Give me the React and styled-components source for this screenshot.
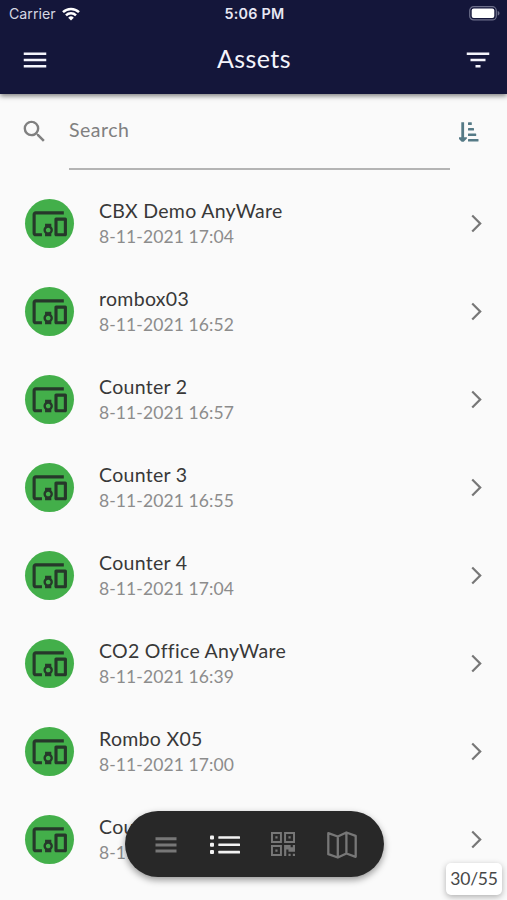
import React from 'react'

import styled, { createGlobalStyle } from 'styled-components';
import {
    MdMenu,
    MdFilterList,
    MdSearch,
    MdDevicesOther,
    MdArrowForwardIos,
} from 'react-icons/md';

const assets = [
    { name: 'CBX Demo AnyWare', date: '8-11-2021 17:04' },
    { name: 'rombox03', date: '8-11-2021 16:52' },
    { name: 'Counter 2', date: '8-11-2021 16:57' },
    { name: 'Counter 3', date: '8-11-2021 16:55' },
    { name: 'Counter 4', date: '8-11-2021 17:04' },
    { name: 'CO2 Office AnyWare', date: '8-11-2021 16:39' },
    { name: 'Rombo X05', date: '8-11-2021 17:00' },
    { name: 'Counter 5', date: '8-11-2021 17:01' },
];

function WifiIcon() {
    return (
        <svg width="18" height="14" viewBox="0 0 18 14" fill="none" stroke="#fff" strokeWidth="2.5">
            <path d="M1 5.2a11.4 11.4 0 0 1 16 0" />
            <path d="M4 8.4a7.1 7.1 0 0 1 10 0" />
            <path d="M6.2 10.7a4 4 0 0 1 5.6 0L9 13.6z" fill="#fff" stroke="none" />
        </svg>
    )
}

function BatteryIcon() {
    return (
        <svg width="31" height="15" viewBox="0 0 31 15">
            <rect x="0.7" y="0.7" width="26.6" height="13.2" rx="4" fill="none" stroke="#6d6f8b" strokeWidth="1.2" />
            <rect x="2.7" y="2.6" width="22.6" height="9.4" rx="2" fill="#fff" />
            <path d="M28.7 5v4.6c1.1-.4 1.8-1.2 1.8-2.3s-.7-1.9-1.8-2.3z" fill="#6d6f8b" />
        </svg>
    )
}

function SortIcon() {
    return (
        <svg width="20" height="20" viewBox="0 0 20 20" fill="#557a86">
            <path d="M2.3.3h2.800v15h2.800v1.200L4.700 19.700h-2L-.4 16.500v-1.200h2.700z" />
            <rect x="9" y=".3" width="3.8" height="2.6" rx=".5" />
            <rect x="9" y="5.900" width="6" height="2.6" rx=".5" />
            <rect x="9" y="11.500" width="8.200" height="2.6" rx=".5" />
            <rect x="9" y="17" width="10.500" height="2.6" rx=".5" />
        </svg>
    )
}

function LinesIcon() {
    return (
        <svg width="22" height="16" viewBox="0 0 22 16" fill="currentColor">
            <path d="M.5.2h21v3H.5zM.5 6.400h21v3H.5zM.5 12.500h21v3H.5z" />
        </svg>
    )
}

function ListIcon() {
    return (
        <svg width="30" height="20" viewBox="0 0 30 20" fill="currentColor">
            <rect x="0" y=".5" width="4" height="4" rx="1" />
            <rect x="0" y="7.8" width="4" height="4" rx="1" />
            <rect x="0" y="15.1" width="4" height="4" rx="1" />
            <rect x="8.3" y="1.2" width="21.7" height="2.6" rx=".5" />
            <rect x="8.3" y="8.5" width="21.7" height="2.6" rx=".5" />
            <rect x="8.3" y="15.8" width="21.7" height="2.6" rx=".5" />
        </svg>
    )
}

function QrIcon() {
    return (
        <svg width="24" height="24" viewBox="0 0 11 11" fill="currentColor" fillRule="evenodd">
            <path d="M0 0h5v5H0zM.9.9v3.2h3.200V.9zM2 2h1v1H2z" />
            <path d="M6 0h5v5H6zM6.900.9v3.200h3.200V.9zM8 2h1v1H8z" />
            <path d="M0 6h5v5H0zM.9 6.900v3.200h3.200V6.900zM2 8h1v1H2z" />
            <path d="M6 6h3v1h1V6h1v3H8V8H7v3H6zM8 10h1v1H8zM10 10h1v1h-1z" />
        </svg>
    )
}

function MapIcon() {
    return (
        <svg width="30" height="28" viewBox="0 0 30 28" fill="none" stroke="currentColor" strokeWidth="2.3" strokeLinejoin="round">
            <path d="M1.3 2.200l9.500 3.300 8.600-4 9.300 3.300v21l-9.300-3.300-8.600 4-9.500-3.300zM10.800 5.500v21M19.400 1.500v21" />
        </svg>
    )
}

function App() {
    return (
        <Screen>
            <GlobalStyle />
            <Header>
                <StatusBar>
                    <Carrier>Carrier <WifiIcon /></Carrier>
                    <Clock>5:06 PM</Clock>
                    <BatteryIcon />
                </StatusBar>
                <Toolbar>
                    <MdMenu size={30} />
                    <h1>Assets</h1>
                    <MdFilterList size={30} />
                </Toolbar>
            </Header>
            <SearchBar>
                <MdSearch size={29} />
                <SearchField>Search</SearchField>
                <SortIcon />
            </SearchBar>
            <List>
                {assets.map((asset) => (
                    <Row key={asset.name}>
                        <Avatar><MdDevicesOther size={37.5} /></Avatar>
                        <Details>
                            <Name>{asset.name}</Name>
                            <Updated>{asset.date}</Updated>
                        </Details>
                        <MdArrowForwardIos size={21} />
                    </Row>
                ))}
            </List>
            <TabBar>
                <Tab><LinesIcon /></Tab>
                <Tab $active><ListIcon /></Tab>
                <Tab><QrIcon /></Tab>
                <Tab><MapIcon /></Tab>
            </TabBar>
            <Counter>30/55</Counter>
        </Screen>
    )
}

const GlobalStyle = createGlobalStyle`
    *{
        box-sizing: border-box;
    }

    body{
        margin: 0;
        background: #fafafa;
    }

    svg{
        display: block;
        flex-shrink: 0;
    }
`;

const Screen = styled.div`
    position: relative;
    width: 507px;
    height: 900px;
    overflow: hidden;
    background: #fafafa;
    font-family: Lato, "Noto Sans", sans-serif;
`;

const Header = styled.header`
    height: 94px;
    background: #14163a;
    color: #f4f4fb;
    box-shadow: 0 2px 5px rgba(0, 0, 0, .5);
`;

const StatusBar = styled.div`
    display: grid;
    grid-template-columns: 1fr auto 1fr;
    align-items: center;
    height: 27px;
    padding: 0 7px 0 9px;
    font-family: Inter, sans-serif;

    > svg{
        justify-self: end;
    }
`;

const Carrier = styled.div`
    display: flex;
    align-items: center;
    gap: 6px;
    font-size: 14.2px;
    color: #d6d7e2;
`;

const Clock = styled.div`
    font-size: 14.3px;
    font-weight: 600;
    letter-spacing: .3px;
    color: #e8e8f4;
`;

const Toolbar = styled.div`
    display: flex;
    align-items: center;
    justify-content: space-between;
    height: 65px;
    padding: 0 14px 0 20px;

    h1{
        margin: 0 5px 3px 0;
        font-size: 25px;
        font-weight: 400;
        letter-spacing: .4px;
    }
`;

const SearchBar = styled.div`
    display: flex;
    height: 85px;
    padding: 23px 28px 0 20px;
    color: #808080;

    > svg:last-child{
        margin: 5px 0 0 9px;
    }
`;

const SearchField = styled.div`
    flex: 1;
    height: 53px;
    margin-left: 20px;
    border-bottom: 2px solid #b4b4b4;
    font-size: 19.5px;
    line-height: 25px;
    letter-spacing: .5px;
`;

const List = styled.div`
    display: flex;
    flex-direction: column;
`;

const Row = styled.div`
    display: flex;
    align-items: center;
    height: 88px;
    padding: 0 20px 0 25px;
    color: #777;
`;

const Avatar = styled.div`
    display: flex;
    align-items: center;
    justify-content: center;
    width: 49px;
    height: 49px;
    padding-top: 1px;
    border-radius: 50%;
    background: #43af4a;
    color: #26382a;
`;

const Details = styled.div`
    flex: 1;
    margin-left: 25px;
    padding-top: 1px;
`;

const Name = styled.div`
    font-size: 19.5px;
    line-height: 26px;
    letter-spacing: .3px;
    color: #383838;
`;

const Updated = styled.div`
    font-size: 17.5px;
    line-height: 25px;
    letter-spacing: .1px;
    color: #8c8c8c;
`;

const TabBar = styled.nav`
    position: absolute;
    left: 125px;
    bottom: 23px;
    display: grid;
    grid-template-columns: repeat(4, 58.7px);
    justify-content: center;
    width: 259px;
    height: 66px;
    padding: 2px 1px 0 0;
    border-radius: 33px;
    background: #282828;
    box-shadow: 0 3px 7px rgba(0, 0, 0, .4);
`;

const Tab = styled.div`
    display: flex;
    align-items: center;
    justify-content: center;
    color: ${(props) => (props.$active ? '#f2f2f2' : '#777')};

    &:nth-child(3){
        padding-bottom: 3px;
    }
`;

const Counter = styled.div`
    position: absolute;
    right: 5px;
    bottom: 5px;
    width: 56px;
    height: 32px;
    border-radius: 5px;
    background: #fff;
    box-shadow: 0 2px 6px rgba(0, 0, 0, .3);
    font-size: 17.5px;
    line-height: 31px;
    letter-spacing: -.2px;
    text-align: center;
    color: #484848;
`;

export default App;
